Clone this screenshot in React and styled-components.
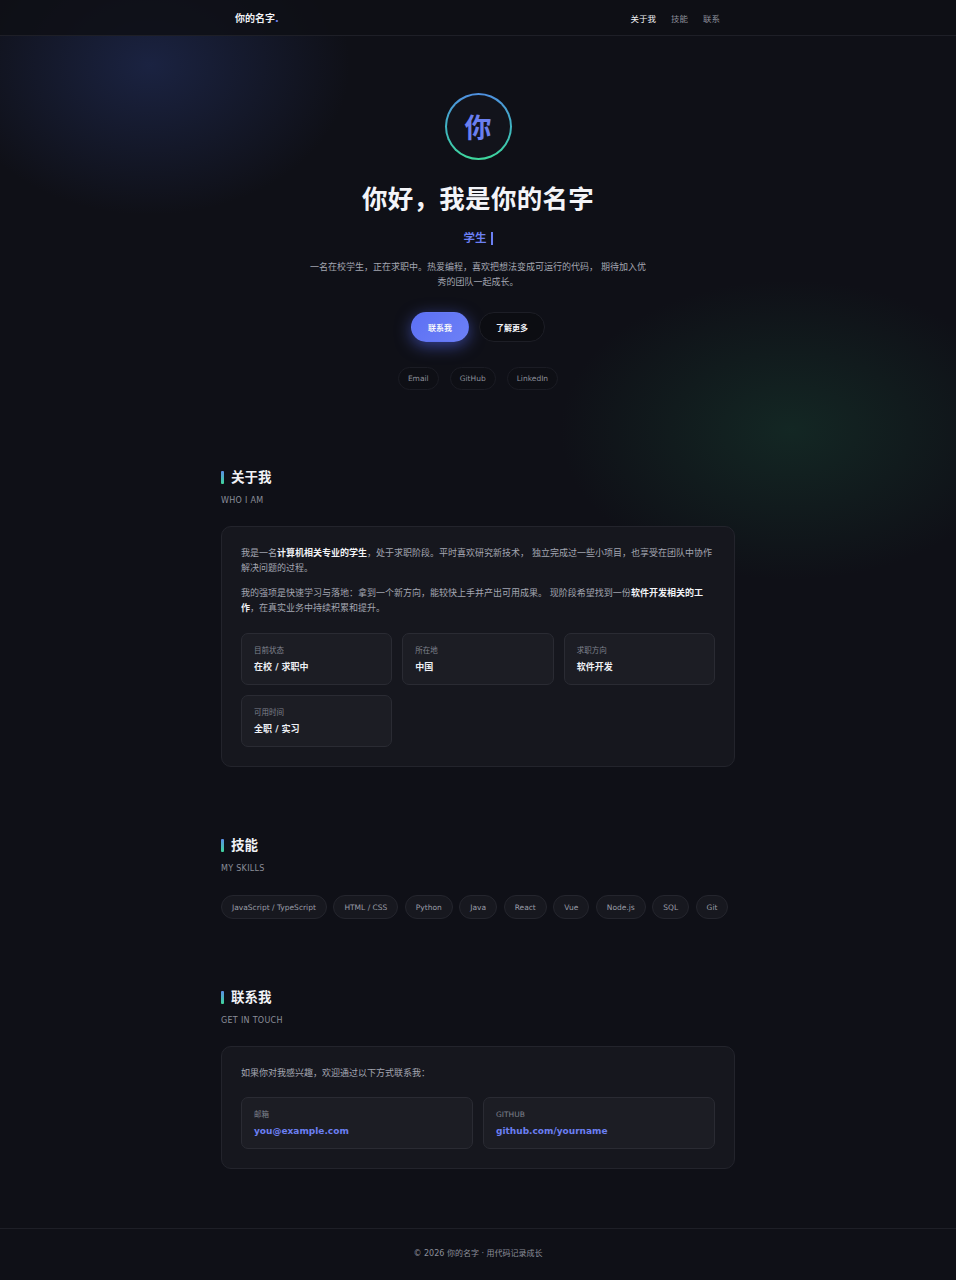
import React from "react";
import styled, { createGlobalStyle } from "styled-components";

const Global = createGlobalStyle`
  * { box-sizing: border-box; }
  html, body { margin: 0; padding: 0; background: #0f1017; }
  body {
    font-family: "DejaVu Sans", "Noto Sans CJK SC", sans-serif;
    color: #e6e7ec;
    -webkit-font-smoothing: antialiased;
  }
  p { margin: 0; }
`;

const Page = styled.div`
  min-height: 1280px;
  background:
    radial-gradient(ellipse 200px 150px at 150px 65px, rgba(36, 50, 100, 0.55), rgba(36, 50, 100, 0) 100%),
    radial-gradient(ellipse 230px 150px at 790px 430px, rgba(22, 54, 44, 0.6), rgba(22, 54, 44, 0) 100%),
    #0f1017;
  background-repeat: no-repeat;
`;

const Nav = styled.header`
  height: 36px;
  border-bottom: 1px solid #1e1f27;
  background: rgba(14, 15, 21, 0.85);
`;

const NavInner = styled.div`
  width: 514px;
  height: 100%;
  margin: 0 auto;
  padding: 0 15px 0 14px;
  display: flex;
  align-items: center;
  justify-content: space-between;
`;

const Logo = styled.div`
  font-size: 10px;
  font-weight: 700;
  color: #f1f2f6;
  span { color: #6b7ff2; }
`;

const NavLinks = styled.nav`
  display: flex;
  gap: 15px;
`;

const NavLink = styled.a`
  font-size: 8.5px;
  color: ${(p) => (p.$active ? "#f1f2f6" : "#8b8e99")};
  text-decoration: none;
`;

const Hero = styled.section`
  padding: 57px 0 43px;
  display: flex;
  flex-direction: column;
  align-items: center;
`;

const AvatarRing = styled.div`
  width: 67px;
  height: 67px;
  border-radius: 50%;
  padding: 2px;
  background: linear-gradient(180deg, #4f8fe0 0%, #3fb7c0 55%, #3ed79b 100%);
`;

const Avatar = styled.div`
  width: 100%;
  height: 100%;
  border-radius: 50%;
  background: #12131b;
  display: flex;
  align-items: center;
  justify-content: center;
  font-size: 27px;
  font-weight: 700;
  color: #6a7ff0;
`;

const Title = styled.h1`
  margin: 22px 0 0;
  font-size: 25.5px;
  line-height: 34px;
  font-weight: 700;
  color: #f3f4f8;
  letter-spacing: 0.3px;
`;

const Role = styled.div`
  margin-top: 14px;
  font-size: 11.5px;
  font-weight: 700;
  color: #6b7ff2;
  line-height: 16px;
  display: flex;
  align-items: center;
  gap: 4px;
`;

const Caret = styled.span`
  display: inline-block;
  width: 2px;
  height: 13px;
  background: #6b7ff2;
`;

const Desc = styled.p`
  margin-top: 14px;
  max-width: 338px;
  text-align: center;
  font-size: 9px;
  line-height: 15px;
  color: #a3a6b1;
`;

const Buttons = styled.div`
  margin-top: 22px;
  display: flex;
  gap: 10px;
`;

const Button = styled.a`
  height: 30px;
  padding: 0 16px;
  border-radius: 999px;
  display: flex;
  align-items: center;
  font-size: 8px;
  font-weight: 700;
  color: #f4f5fa;
  text-decoration: none;
  background: ${(p) => (p.$primary ? "linear-gradient(135deg, #5c70f4, #6d80f6)" : "#0c0d12")};
  border: 1px solid ${(p) => (p.$primary ? "transparent" : "#1d1e26")};
  box-shadow: ${(p) => (p.$primary ? "0 4px 16px rgba(88, 108, 245, 0.55)" : "none")};
`;

const Socials = styled.div`
  margin-top: 25px;
  display: flex;
  gap: 11px;
`;

const SocialPill = styled.a`
  height: 23px;
  padding: 0 9px;
  border-radius: 999px;
  border: 1px solid #1b1c24;
  background: #0e0f15;
  display: flex;
  align-items: center;
  font-size: 7.5px;
  color: #8d909b;
  text-decoration: none;
`;

const Section = styled.section`
  width: 514px;
  margin: 0 auto;
  padding: 34px 0 34px;
`;

const SectionTitle = styled.h2`
  margin: 0;
  display: flex;
  align-items: center;
  gap: 7px;
  font-size: 13.5px;
  line-height: 20px;
  font-weight: 700;
  color: #f1f2f6;
  &::before {
    content: "";
    width: 3px;
    height: 13px;
    border-radius: 1px;
    background: linear-gradient(180deg, #5b8ee8, #3fd69b);
  }
`;

const SectionSub = styled.div`
  margin-top: 8px;
  font-size: 8px;
  line-height: 12px;
  letter-spacing: 0.3px;
  color: #8b8e99;
`;

const Card = styled.div`
  margin-top: 19px;
  padding: 19px 19px 19px;
  background: #16171e;
  border: 1px solid #23242c;
  border-radius: 10px;
`;

const Para = styled.p`
  font-size: 9px;
  line-height: 15px;
  color: #a3a6b1;
  & + & { margin-top: 10px; }
  b { color: #f1f2f6; font-weight: 700; }
`;

const InfoGrid = styled.div`
  margin-top: 17px;
  display: grid;
  grid-template-columns: repeat(3, 1fr);
  gap: 10px;
`;

const InfoCard = styled.div`
  height: 52px;
  padding: 11px 12px;
  border-radius: 7px;
  background: #1c1d24;
  border: 1px solid #2a2b33;
  display: flex;
  flex-direction: column;
  gap: 4px;
`;

const InfoLabel = styled.div`
  font-size: 7.5px;
  line-height: 11px;
  color: #7f828d;
`;

const InfoValue = styled.div`
  font-size: 9px;
  line-height: 14px;
  font-weight: 700;
  color: ${(p) => (p.$link ? "#6b7ff2" : "#eef0f5")};
`;

const Skills = styled.div`
  margin-top: 20px;
  display: flex;
  flex-wrap: wrap;
  gap: 6.5px;
`;

const Skill = styled.span`
  height: 24px;
  padding: 0 10px;
  border-radius: 999px;
  background: #17181f;
  border: 1px solid #24252d;
  display: flex;
  align-items: center;
  font-size: 7.5px;
  color: #9a9da8;
`;

const ContactGrid = styled.div`
  margin-top: 16px;
  display: grid;
  grid-template-columns: repeat(2, 1fr);
  gap: 10px;
`;

const Footer = styled.footer`
  margin-top: 25px;
  border-top: 1px solid #1e1f27;
  padding: 19px 0 20px;
  text-align: center;
  font-size: 8px;
  line-height: 12px;
  color: #8b8e99;
`;

const info = [
  ["目前状态", "在校 / 求职中"],
  ["所在地", "中国"],
  ["求职方向", "软件开发"],
  ["可用时间", "全职 / 实习"],
];

const skills = ["JavaScript / TypeScript", "HTML / CSS", "Python", "Java", "React", "Vue", "Node.js", "SQL", "Git"];

export default function App() {
  return (
    <Page>
      <Global />
      <Nav>
        <NavInner>
          <Logo>你的名字<span>.</span></Logo>
          <NavLinks>
            <NavLink $active href="#about">关于我</NavLink>
            <NavLink href="#skills">技能</NavLink>
            <NavLink href="#contact">联系</NavLink>
          </NavLinks>
        </NavInner>
      </Nav>

      <Hero>
        <AvatarRing><Avatar>你</Avatar></AvatarRing>
        <Title>你好，我是你的名字</Title>
        <Role>学生 <Caret /></Role>
        <Desc>一名在校学生，正在求职中。热爱编程，喜欢把想法变成可运行的代码， 期待加入优秀的团队一起成长。</Desc>
        <Buttons>
          <Button $primary href="#contact">联系我</Button>
          <Button href="#about">了解更多</Button>
        </Buttons>
        <Socials>
          <SocialPill href="#">Email</SocialPill>
          <SocialPill href="#">GitHub</SocialPill>
          <SocialPill href="#">LinkedIn</SocialPill>
        </Socials>
      </Hero>

      <Section id="about">
        <SectionTitle>关于我</SectionTitle>
        <SectionSub>WHO I AM</SectionSub>
        <Card>
          <Para>我是一名<b>计算机相关专业的学生</b>，处于求职阶段。平时喜欢研究新技术， 独立完成过一些小项目，也享受在团队中协作解决问题的过程。</Para>
          <Para>我的强项是快速学习与落地：拿到一个新方向，能较快上手并产出可用成果。 现阶段希望找到一份<b>软件开发相关的工作</b>，在真实业务中持续积累和提升。</Para>
          <InfoGrid>
            {info.map(([l, v]) => (
              <InfoCard key={l}>
                <InfoLabel>{l}</InfoLabel>
                <InfoValue>{v}</InfoValue>
              </InfoCard>
            ))}
          </InfoGrid>
        </Card>
      </Section>

      <Section id="skills">
        <SectionTitle>技能</SectionTitle>
        <SectionSub>MY SKILLS</SectionSub>
        <Skills>
          {skills.map((s) => <Skill key={s}>{s}</Skill>)}
        </Skills>
      </Section>

      <Section id="contact">
        <SectionTitle>联系我</SectionTitle>
        <SectionSub>GET IN TOUCH</SectionSub>
        <Card>
          <Para>如果你对我感兴趣，欢迎通过以下方式联系我：</Para>
          <ContactGrid>
            <InfoCard>
              <InfoLabel>邮箱</InfoLabel>
              <InfoValue $link>you@example.com</InfoValue>
            </InfoCard>
            <InfoCard>
              <InfoLabel>GITHUB</InfoLabel>
              <InfoValue $link>github.com/yourname</InfoValue>
            </InfoCard>
          </ContactGrid>
        </Card>
      </Section>

      <Footer>© 2026 你的名字 · 用代码记录成长</Footer>
    </Page>
  );
}
